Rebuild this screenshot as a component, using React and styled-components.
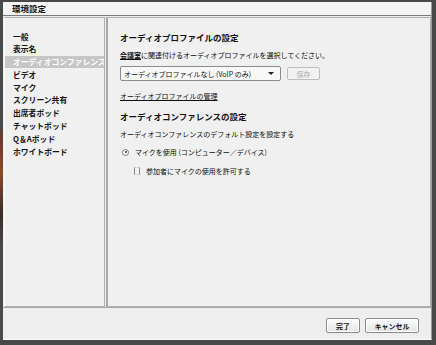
import React from "react";
import styled, { createGlobalStyle } from "styled-components";

const Global = createGlobalStyle`
  html, body { margin: 0; padding: 0; background: #4a4a4a; }
  body {
    width: 436px; height: 345px; overflow: hidden;
    font-family: "Noto Sans CJK JP", "Noto Sans", sans-serif;
    color: #111;
  }
  * { box-sizing: border-box; }
`;

const Frame = styled.div`
  width: 436px;
  height: 345px;
  padding: 2px 4px 5px 3px;
  background:
    linear-gradient(#4a4a4a 0 36%, #6a3a2c 40%, #8c4a2a 50%, #3a2c2a 62%, #4a4a4a 72%) left top / 3px 100% no-repeat,
    #484848;
  display: flex;
`;

const Window = styled.div`
  flex: 1;
  display: flex;
  flex-direction: column;
  background: #eeeeee;
  border-right: 1px solid #9a9a9a;
  border-bottom: 1px solid #fafafa;
`;

const TitleBar = styled.div`
  height: 14px;
  background: #f4f4f4;
  border-bottom: 1px solid #7a7a7a;
  display: flex;
  align-items: center;
  padding-left: 9px;
  font-size: 8.5px;
  font-weight: 700;
  line-height: 1;
`;

const Main = styled.div`
  height: 291px;
  display: flex;
  gap: 1px;
  padding: 1px 0 0 1px;
`;

const NavPanel = styled.div`
  width: 101px;
  background: #f0f0f0;
  border: 1px solid #b0b0b0;
  border-left-color: #fbfbfb;
  padding-top: 12px;
  display: flex;
  flex-direction: column;
  overflow: hidden;
`;

const NavItem = styled.div`
  height: 12.8px;
  display: flex;
  align-items: center;
  padding-left: 8px;
  font-size: 7.8px;
  font-weight: 700;
  white-space: nowrap;
  line-height: 1;
  background: ${(p) => (p.$active ? "#c6c6c6" : "transparent")};
  color: ${(p) => (p.$active ? "#ffffff" : "#151515")};
`;

const ContentPanel = styled.div`
  flex: 1;
  background: #f0f0f0;
  border: 1px solid #b0b0b0;
  border-left: 2px solid #a8a8a8;
  padding: 13px 0 0 12px;
  display: flex;
  flex-direction: column;
  align-items: flex-start;
`;

const Heading = styled.div`
  font-size: 8.5px;
  font-weight: 700;
  line-height: 12px;
  height: 12px;
  white-space: nowrap;
  margin-top: ${(p) => p.$mt || 0}px;
`;

const Text = styled.div`
  font-size: 7px;
  line-height: 10px;
  height: 10px;
  white-space: nowrap;
  color: #0c0c0c;
  margin-top: ${(p) => p.$mt || 0}px;
  b { font-weight: 700; text-decoration: underline; }
`;

const Link = styled.a`
  font-size: 7px;
  line-height: 10px;
  height: 10px;
  white-space: nowrap;
  color: #111;
  text-decoration: underline;
  margin-top: ${(p) => p.$mt || 0}px;
`;

const Row = styled.div`
  display: flex;
  align-items: center;
  gap: 6px;
  margin-top: ${(p) => p.$mt || 0}px;
  margin-left: ${(p) => p.$ml || 0}px;
`;

const Select = styled.div`
  width: 161px;
  height: 15px;
  border: 1px solid #8c8c8c;
  border-radius: 2px;
  background: #f8f8f8;
  display: flex;
  align-items: center;
  justify-content: space-between;
  padding: 0 6px 0 3px;
  font-size: 7px;
  white-space: nowrap;
`;

const Caret = styled.span`
  width: 0;
  height: 0;
  border-left: 3px solid transparent;
  border-right: 3px solid transparent;
  border-top: 3px solid #222;
`;

const DisabledButton = styled.div`
  width: 33px;
  height: 13px;
  border: 1px solid #bdbdbd;
  border-radius: 2px;
  background: #f2f2f2;
  color: #aaaaaa;
  font-size: 7px;
  display: flex;
  align-items: center;
  justify-content: center;
`;

const Radio = styled.span`
  width: 7px;
  height: 7px;
  border-radius: 50%;
  border: 1px solid #7a7a7a;
  background: #fafafa;
  display: flex;
  align-items: center;
  justify-content: center;
  &::after {
    content: "";
    width: 2px;
    height: 2px;
    border-radius: 50%;
    background: #333;
  }
`;

const Check = styled.span`
  width: 6px;
  height: 8px;
  border-left: 1px solid #888;
  border-right: 1px solid #888;
  border-top: 1px solid #d8d8d8;
  border-bottom: 1px solid #d8d8d8;
  background: #f4f4f4;
`;

const Footer = styled.div`
  flex: 1;
  display: flex;
  justify-content: flex-end;
  align-items: flex-start;
  gap: 5px;
  padding: 10px 12px 0 0;
  border-top: 1px solid #a8a8a8;
`;

const Button = styled.div`
  width: ${(p) => p.$w}px;
  height: 15px;
  border: 1px solid #8a8a8a;
  border-radius: 2px;
  background: linear-gradient(#fdfdfd, #e4e4e4);
  box-shadow: inset 0 0 0 1px #ffffff;
  font-size: 7px;
  font-weight: 700;
  display: flex;
  align-items: center;
  justify-content: center;
  white-space: nowrap;
`;

const navItems = [
  "一般",
  "表示名",
  "オーディオコンファレンス",
  "ビデオ",
  "マイク",
  "スクリーン共有",
  "出席者ポッド",
  "チャットポッド",
  "Q＆Aポッド",
  "ホワイトボード",
];

export default function App() {
  return (
    <>
      <Global />
      <Frame>
        <Window>
          <TitleBar>環境設定</TitleBar>
          <Main>
            <NavPanel>
              {navItems.map((n, i) => (
                <NavItem key={n} $active={i === 2}>{n}</NavItem>
              ))}
            </NavPanel>
            <ContentPanel>
              <Heading>オーディオプロファイルの設定</Heading>
              <Text $mt={7}><b>会議室</b>に関連付けるオーディオプロファイルを選択してください。</Text>
              <Row $mt={6}>
                <Select>
                  <span>オーディオプロファイルなし (VoIP のみ)</span>
                  <Caret />
                </Select>
                <DisabledButton>保存</DisabledButton>
              </Row>
              <Link $mt={10}>オーディオプロファイルの管理</Link>
              <Heading $mt={9}>オーディオコンファレンスの設定</Heading>
              <Text $mt={7}>オーディオコンファレンスのデフォルト設定を設定する</Text>
              <Row $mt={8} $ml={2}>
                <Radio />
                <Text>マイクを使用 (コンピューター／デバイス)</Text>
              </Row>
              <Row $mt={9} $ml={14}>
                <Check />
                <Text>参加者にマイクの使用を許可する</Text>
              </Row>
            </ContentPanel>
          </Main>
          <Footer>
            <Button $w={34}>完了</Button>
            <Button $w={54}>キャンセル</Button>
          </Footer>
        </Window>
      </Frame>
    </>
  );
}
